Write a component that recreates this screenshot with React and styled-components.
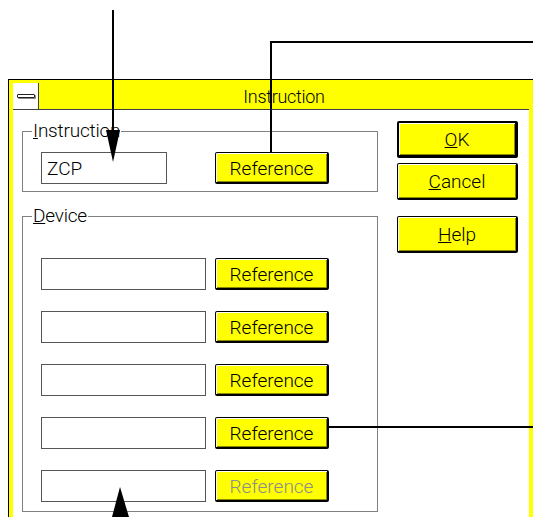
import React from 'react'
import styled, { createGlobalStyle } from 'styled-components'

const GlobalStyle = createGlobalStyle`
  html, body {
    margin: 0;
    padding: 0;
    overflow: hidden;
    background: #fff;
  }
  body {
    font-family: Roboto, "Liberation Sans", Arial, sans-serif;
    font-weight: 300;
    color: #000;
  }
`

const Stage = styled.div`
  position: relative;
  width: 533px;
  height: 517px;
  overflow: hidden;
  box-sizing: border-box;
  padding: 79px 0 0 8px;
  background: #fff;
`

const Window = styled.div`
  width: 526px;
  box-sizing: border-box;
  border: 1px solid #000;
  background: #ffff00;
  padding: 3px 4px 0 4px;
`

const TitleBar = styled.div`
  display: flex;
  height: 27px;
  box-sizing: border-box;
  border-bottom: 1px solid #404040;
  background: #ffff00;
`

const SysMenu = styled.div`
  width: 26px;
  box-sizing: border-box;
  border-right: 1px solid #404040;
  background: #fff;
  display: flex;
  align-items: center;
  justify-content: center;
`

const Dash = styled.span`
  display: block;
  width: 18px;
  height: 4px;
  box-sizing: border-box;
  border: 1px solid #222;
  border-radius: 1px;
  background: #fff;
  box-shadow: 1px 1px 0 #888;
`

const Caption = styled.div`
  flex: 1;
  text-align: center;
  font-size: 18px;
  letter-spacing: -0.3px;
  line-height: 28px;
`

const Client = styled.div`
  display: flex;
  gap: 19px;
  height: 440px;
  box-sizing: border-box;
  padding: 11px 0 0 9px;
  background: #fff;
`

const LeftCol = styled.div`
  width: 356px;
  display: flex;
  flex-direction: column;
`

const GroupBox = styled.fieldset`
  margin: ${p => p.$top}px 0 0 0;
  min-width: 0;
  border: 1px solid #808080;
  padding: ${p => p.$padTop}px 0 ${p => p.$padBottom}px 9px;
`

const Legend = styled.legend`
  font-size: 19px;
  letter-spacing: -0.2px;
  line-height: 18px;
  padding: 0 1px;
`

const Rows = styled.div`
  display: flex;
  flex-direction: column;
  gap: 21px;
  margin-left: 9px;
`

const Row = styled.div`
  display: flex;
  align-items: center;
  gap: ${p => p.$gap}px;
`

const TextBox = styled.div`
  width: ${p => p.$width}px;
  height: 32px;
  box-sizing: border-box;
  border: 1px solid #555;
  background: #fff;
  font-size: 19px;
  line-height: 31px;
  padding-left: 5px;
`

const Button = styled.div`
  width: ${p => p.$width}px;
  height: ${p => p.$height}px;
  box-sizing: border-box;
  display: flex;
  align-items: center;
  justify-content: center;
  padding-top: 1px;
  background: #ffff00;
  border: solid #000;
  border-width: ${p => (p.$default ? '2px 3px 3px 2px' : '1px 2px 2px 1px')};
  border-radius: 2px;
  box-shadow: inset 1px 1px 0 #fff, inset -1px -1px 0 #8a8a00;
  font-size: 19px;
  color: ${p => (p.$disabled ? '#8c8c8c' : '#000')};
  margin-top: ${p => p.$top || 0}px;
`

const RightCol = styled.div`
  width: 121px;
  display: flex;
  flex-direction: column;
`

const Callouts = styled.svg`
  position: absolute;
  left: 0;
  top: 0;
  pointer-events: none;
`

const App = () => (
  <Stage>
    <GlobalStyle />
    <Window>
      <TitleBar>
        <SysMenu>
          <Dash />
        </SysMenu>
        <Caption>Instruction</Caption>
      </TitleBar>
      <Client>
        <LeftCol>
          <GroupBox $top={1} $padTop={12} $padBottom={7}>
            <Legend>
              <u>I</u>nstruction
            </Legend>
            <Rows>
              <Row $gap={48}>
                <TextBox $width={126}>ZCP</TextBox>
                <Button $width={114} $height={32}>Reference</Button>
              </Row>
            </Rows>
          </GroupBox>
          <GroupBox $top={15} $padTop={33} $padBottom={9}>
            <Legend>
              <u>D</u>evice
            </Legend>
            <Rows>
              {[0, 1, 2, 3, 4].map(i => (
                <Row key={i} $gap={9}>
                  <TextBox $width={165} />
                  <Button $width={114} $height={32} $disabled={i === 4}>
                    Reference
                  </Button>
                </Row>
              ))}
            </Rows>
          </GroupBox>
        </LeftCol>
        <RightCol>
          <Button $width={121} $height={37} $default>
            <span><u>O</u>K</span>
          </Button>
          <Button $width={121} $height={37} $top={5}>
            <span><u>C</u>ancel</span>
          </Button>
          <Button $width={121} $height={37} $top={16}>
            <span><u>H</u>elp</span>
          </Button>
        </RightCol>
      </Client>
    </Window>
    <Callouts width="533" height="517" viewBox="0 0 533 517">
      <line x1="113" y1="10" x2="113" y2="135" stroke="#000" strokeWidth="2" />
      <polygon points="106,130 120,130 113,162" fill="#000" />
      <path d="M271 152 V42 H533" stroke="#000" strokeWidth="2" fill="none" />
      <line x1="328" y1="427" x2="533" y2="427" stroke="#000" strokeWidth="2" />
      <polygon points="120,487 112,517 129,517" fill="#000" />
    </Callouts>
  </Stage>
)

export default App
